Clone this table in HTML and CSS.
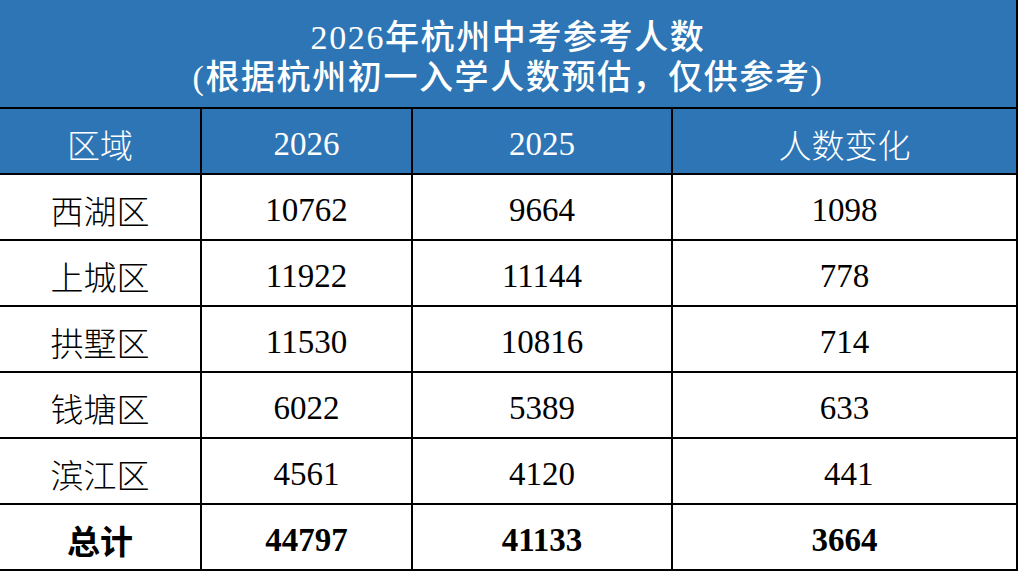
FILE: index.html
```html
<!DOCTYPE html>
<html>
<head>
<meta charset="utf-8">
<title>2026年杭州中考参考人数</title>
<link rel="stylesheet" href="styles.css">
</head>
<body>
<table class="sheet">
  <colgroup>
    <col class="c1"><col class="c2"><col class="c3"><col class="c4">
  </colgroup>
  <thead>
    <tr class="title-row">
      <th colspan="4" class="title">
        <div>2026年杭州中考参考人数</div>
        <div>(根据杭州初一入学人数预估，仅供参考)</div>
      </th>
    </tr>
    <tr class="head-row">
      <th class="zh">区域</th><th class="num">2026</th><th class="num">2025</th><th class="zh">人数变化</th>
    </tr>
  </thead>
  <tbody>
    <tr><td class="zh">西湖区</td><td class="num">10762</td><td class="num">9664</td><td class="num">1098</td></tr>
    <tr><td class="zh">上城区</td><td class="num">11922</td><td class="num">11144</td><td class="num">778</td></tr>
    <tr><td class="zh">拱墅区</td><td class="num">11530</td><td class="num">10816</td><td class="num">714</td></tr>
    <tr><td class="zh">钱塘区</td><td class="num">6022</td><td class="num">5389</td><td class="num">633</td></tr>
    <tr><td class="zh">滨江区</td><td class="num">4561</td><td class="num">4120</td><td class="num">&nbsp;441</td></tr>
    <tr class="total"><td class="zh">总计</td><td class="num">44797</td><td class="num">41133</td><td class="num">3664</td></tr>
  </tbody>
</table>
</body>
</html>
```
FILE: styles.css
```css
html, body {
  margin: 0;
  padding: 0;
  background: #ffffff;
}

.sheet {
  border-collapse: collapse;
  table-layout: fixed;
  width: 1017px;
  font-family: "Liberation Serif", "Noto Sans CJK SC", serif;
  font-size: 33px;
  color: #000;
}

.c1 { width: 201px; }
.c2 { width: 211px; }
.c3 { width: 260px; }
.c4 { width: 345px; }

.sheet th,
.sheet td {
  border: 2px solid #000;
  text-align: center;
  vertical-align: middle;
  padding: 6px 0 0 0;
  font-weight: normal;
  line-height: 40px;
}

.sheet tr > :first-child { border-left: none; }

.title-row th {
  border-top: none;
  height: 108px;
  box-sizing: border-box;
  background: #2e75b6;
  color: #fff;
  font-size: 34px;
  line-height: 40px;
  font-weight: 500;
  padding-top: 8px;
  letter-spacing: 1.6px;
}

.head-row th {
  height: 58px;
  background: #2e75b6;
  color: #fff;
}

.sheet td {
  height: 58px;
}

.sheet .num {
  font-family: "Liberation Serif", "Times New Roman", serif;
  font-weight: 400;
}

.sheet .zh {
  font-family: "Noto Sans CJK SC", sans-serif;
  font-weight: 300;
}

.sheet .total td {
  font-weight: bold;
}
```
